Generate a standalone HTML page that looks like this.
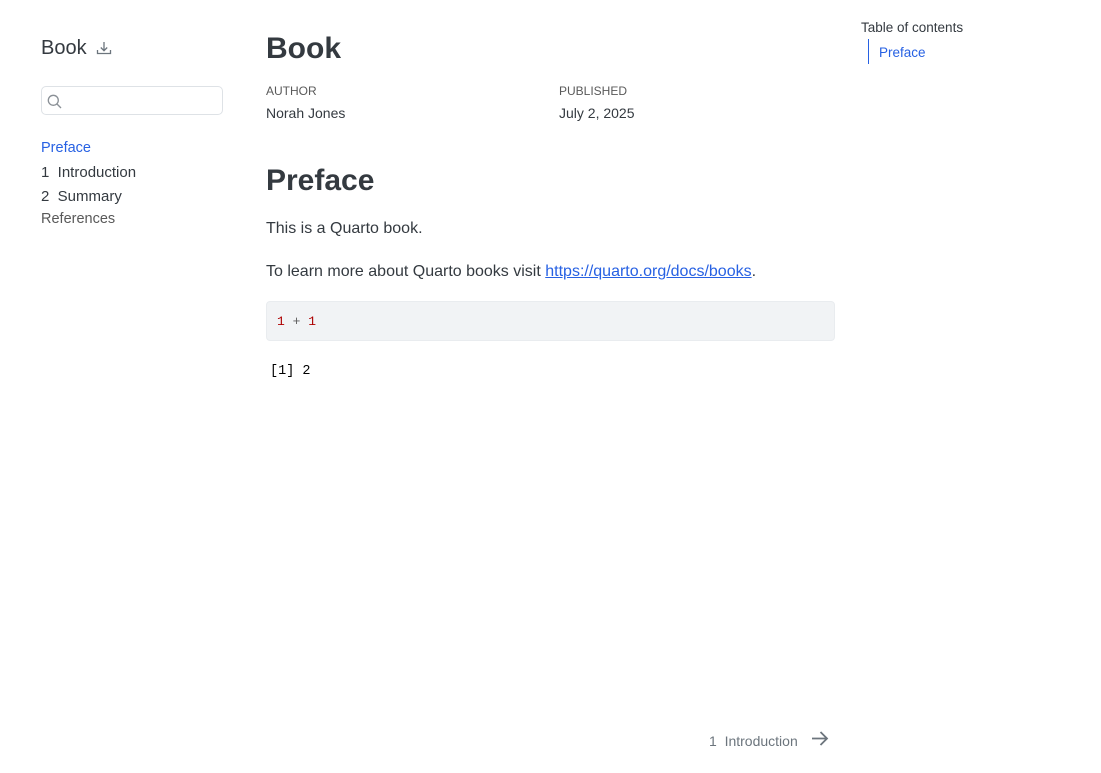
<!DOCTYPE html>
<html><head><meta charset="utf-8"><style>
*{margin:0;padding:0;box-sizing:border-box}
body{width:1101px;height:773px;background:#fff;font-family:"Liberation Sans",sans-serif;color:#343a40;position:relative;overflow:hidden}
.a{position:absolute;white-space:nowrap}
a{color:#2761e3}
</style></head><body>
<div class="a" style="left:41px;top:37px;font-size:20px;color:#343a40">Book</div>
<svg class="a" style="left:96px;top:40px" width="16" height="16" viewBox="0 0 16 16" fill="none" stroke="#6c757d" stroke-width="1.3"><path d="M1.5 10v3.5h13V10M8 2v8.5M4.8 7.5 8 10.7l3.2-3.2"/></svg>
<div class="a" style="left:41px;top:86px;width:182px;height:29px;border:1px solid #dee2e6;border-radius:5px"></div>
<svg class="a" style="left:47px;top:94px" width="15" height="15" viewBox="0 0 15 15" fill="none" stroke="#8a9096" stroke-width="1.3"><circle cx="6.3" cy="6.3" r="5"/><path d="M10 10l4 4"/></svg>
<div class="a" style="left:41px;top:140px;font-size:14.5px;color:#2761e3">Preface</div>
<div class="a" style="left:41px;top:164px;font-size:15px;color:#343a40">1&nbsp; Introduction</div>
<div class="a" style="left:41px;top:188px;font-size:15px;color:#343a40">2&nbsp; Summary</div>
<div class="a" style="left:41px;top:211px;font-size:14.5px;color:#595959">References</div>

<div class="a" style="left:266px;top:32px;font-size:30px;font-weight:bold;color:#343a40">Book</div>
<div class="a" style="left:266px;top:84px;font-size:12px;color:#595959">AUTHOR</div>
<div class="a" style="left:266px;top:105px;font-size:14px">Norah Jones</div>
<div class="a" style="left:559px;top:84px;font-size:12px;color:#595959">PUBLISHED</div>
<div class="a" style="left:559px;top:105px;font-size:14px">July 2, 2025</div>

<div class="a" style="left:266px;top:164px;font-size:30px;font-weight:bold;color:#343a40">Preface</div>
<div class="a" style="left:266px;top:220px;font-size:16px">This is a Quarto book.</div>
<div class="a" style="left:266px;top:263px;font-size:16px">To learn more about Quarto books visit <a href="#">https://quarto.org/docs/books</a>.</div>
<div class="a" style="left:266px;top:301px;width:569px;height:40px;background:#f1f3f5;border-radius:4px;border:1px solid #e9ecef"></div>
<div class="a" style="left:277px;top:314px;font-family:'Liberation Mono',monospace;font-size:13px"><span style="color:#ad0000">1</span> <span style="color:#5e5e5e">+</span> <span style="color:#ad0000">1</span></div>
<div class="a" style="left:270px;top:364px;font-family:'Liberation Mono',monospace;font-size:13.5px;color:#000">[1] 2</div>

<div class="a" style="left:861px;top:20px;font-size:13.5px;color:#343a40">Table of contents</div>
<div class="a" style="left:868px;top:39px;width:1px;height:25px;background:#2761e3"></div>
<div class="a" style="left:879px;top:45px;font-size:13.5px;color:#2761e3">Preface</div>

<div class="a" style="left:709px;top:733px;font-size:14px;color:#6c757d">1&nbsp; Introduction</div>
<svg class="a" style="left:811px;top:730px" width="18" height="17" viewBox="0 0 18 17" fill="none" stroke="#6c757d" stroke-width="1.8"><path d="M1 8.5h15M9.5 2l6.5 6.5L9.5 15"/></svg>
</body></html>
